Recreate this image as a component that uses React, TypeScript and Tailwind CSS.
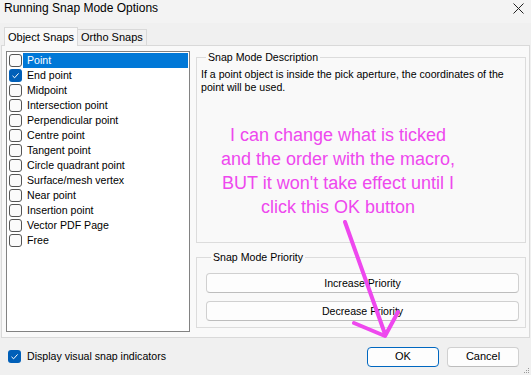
import React from "react";

const items = [
  "Point",
  "End point",
  "Midpoint",
  "Intersection point",
  "Perpendicular point",
  "Centre point",
  "Tangent point",
  "Circle quadrant point",
  "Surface/mesh vertex",
  "Near point",
  "Insertion point",
  "Vector PDF Page",
  "Free",
];

function Check({ checked }: { checked: boolean }) {
  return checked ? (
    <div className="w-[13px] h-[13px] rounded-[3px] bg-[#005fb8] flex items-center justify-center shrink-0">
      <svg width="9" height="9" viewBox="0 0 9 9">
        <path d="M1.5 4.8 L3.6 6.8 L7.6 2.4" stroke="#ffffff" strokeWidth="1" fill="none" />
      </svg>
    </div>
  ) : (
    <div className="w-[13px] h-[13px] rounded-[3px] border border-[#555555] bg-[#fbfbfb] shrink-0" />
  );
}

export default function App() {
  return (
    <div
      className="relative w-[531px] h-[375px] flex flex-col bg-[#f0f0f0] text-[10.6px] leading-[13px] text-black overflow-hidden"
      style={{ fontFamily: '"Liberation Sans", Arial, sans-serif' }}
    >
      {/* Title bar */}
      <div className="h-[23px] bg-[#f3f3f3] flex justify-between items-start pl-[4px] pr-[7px] pt-[1px]">
        <span className="text-[12px] leading-[15px]">Running Snap Mode Options</span>
        <svg width="11" height="11" viewBox="0 0 11 11" className="mt-[2px]">
          <path d="M0.5 0.5 L10.5 10.5 M10.5 0.5 L0.5 10.5" stroke="#222" strokeWidth="1" />
        </svg>
      </div>

      {/* Tab strip */}
      <div className="h-[22px] flex items-end pl-[4px] text-[11px]">
        <div className="relative top-[1px] z-10 h-[19px] bg-[#f9f9f9] border border-b-0 border-[#d9d9d9] px-[3px] flex items-center">
          Object Snaps
        </div>
        <div className="h-[16px] border border-b-0 border-l-0 border-[#d9d9d9] bg-[#f0f0f0] px-[3px] flex items-center">
          Ortho Snaps
        </div>
      </div>

      {/* Tab page */}
      <div className="mx-[1px] h-[293px] border border-[#d9d9d9] bg-[#f9f9f9] flex gap-[6px] pl-[4px] pr-[3px] pt-[5px] pb-[5px]">
        <div className="w-[184px] border border-[#828282] bg-white p-[1px] flex flex-col">
          {items.map((it, i) => (
            <div key={it} className="h-[15px] flex items-center pl-[1px]">
              <Check checked={i === 1} />
              <div
                className={
                  "ml-[1px] flex-1 h-[15px] flex items-center pl-[4px] " +
                  (i === 0 ? "bg-[#0078d7] text-white" : "")
                }
              >
                {it}
              </div>
            </div>
          ))}
        </div>

        <div className="flex-1 flex flex-col gap-[8px]">
          <fieldset className="h-[192px] border border-[#dcdcdc] pl-[4px] pr-[4px]">
            <legend className="ml-[5px] px-[2px] leading-[13px]">Snap Mode Description</legend>
            <p className="mt-[4px]">
              If a point object is inside the pick aperture, the coordinates of the
              <br />
              point will be used.
            </p>
          </fieldset>
          <fieldset className="h-[77px] border border-[#dcdcdc] pl-[9px] pr-[6px]">
            <legend className="ml-[5px] px-[2px] leading-[13px]">Snap Mode Priority</legend>
            <div className="mt-[9px] flex flex-col gap-[8px]">
              <button className="h-[20px] rounded-[4px] border border-[#d0d0d0] border-b-[#bdbdbd] bg-[#fdfdfd] text-[10.6px]">
                Increase Priority
              </button>
              <button className="h-[20px] rounded-[4px] border border-[#d0d0d0] border-b-[#bdbdbd] bg-[#fdfdfd] text-[10.6px]">
                Decrease Priority
              </button>
            </div>
          </fieldset>
        </div>
      </div>

      {/* Bottom bar */}
      <div className="flex-1 flex items-center justify-between pl-[8px] pr-[12px]">
        <div className="flex items-center gap-[6px]">
          <Check checked={true} />
          <span>Display visual snap indicators</span>
        </div>
        <div className="flex gap-[8px]">
          <button className="w-[72px] h-[20px] rounded-[4px] border border-[#0067c0] bg-[#fdfdfd] text-[11px]">
            OK
          </button>
          <button className="w-[72px] h-[20px] rounded-[4px] border border-[#d0d0d0] border-b-[#bdbdbd] bg-[#fdfdfd] text-[11px]">
            Cancel
          </button>
        </div>
      </div>

      {/* resize grip */}
      <svg className="absolute right-[1px] bottom-[1px]" width="6" height="6" viewBox="0 0 6 6">
        <rect x="4" y="0" width="1" height="1" fill="#999" />
        <rect x="2" y="2" width="1" height="1" fill="#999" />
        <rect x="4" y="2" width="1" height="1" fill="#999" />
        <rect x="0" y="4" width="1" height="1" fill="#999" />
        <rect x="2" y="4" width="1" height="1" fill="#999" />
        <rect x="4" y="4" width="1" height="1" fill="#999" />
      </svg>

      {/* annotation */}
      <div className="absolute left-[213px] top-[123px] w-[250px] text-center text-[18px] leading-[24px] text-[#ee48ee]">
        I can change what is ticked
        <br />
        and the order with the macro,
        <br />
        BUT it won't take effect until I
        <br />
        click this OK button
      </div>
      <svg className="absolute left-0 top-0 pointer-events-none" width="531" height="375" viewBox="0 0 531 375">
        <path
          d="M345 222 L385 334 M354 323 L385 336 L398 312"
          stroke="#ee48ee"
          strokeWidth="4"
          strokeLinecap="round"
          strokeLinejoin="round"
          fill="none"
        />
      </svg>
    </div>
  );
}
